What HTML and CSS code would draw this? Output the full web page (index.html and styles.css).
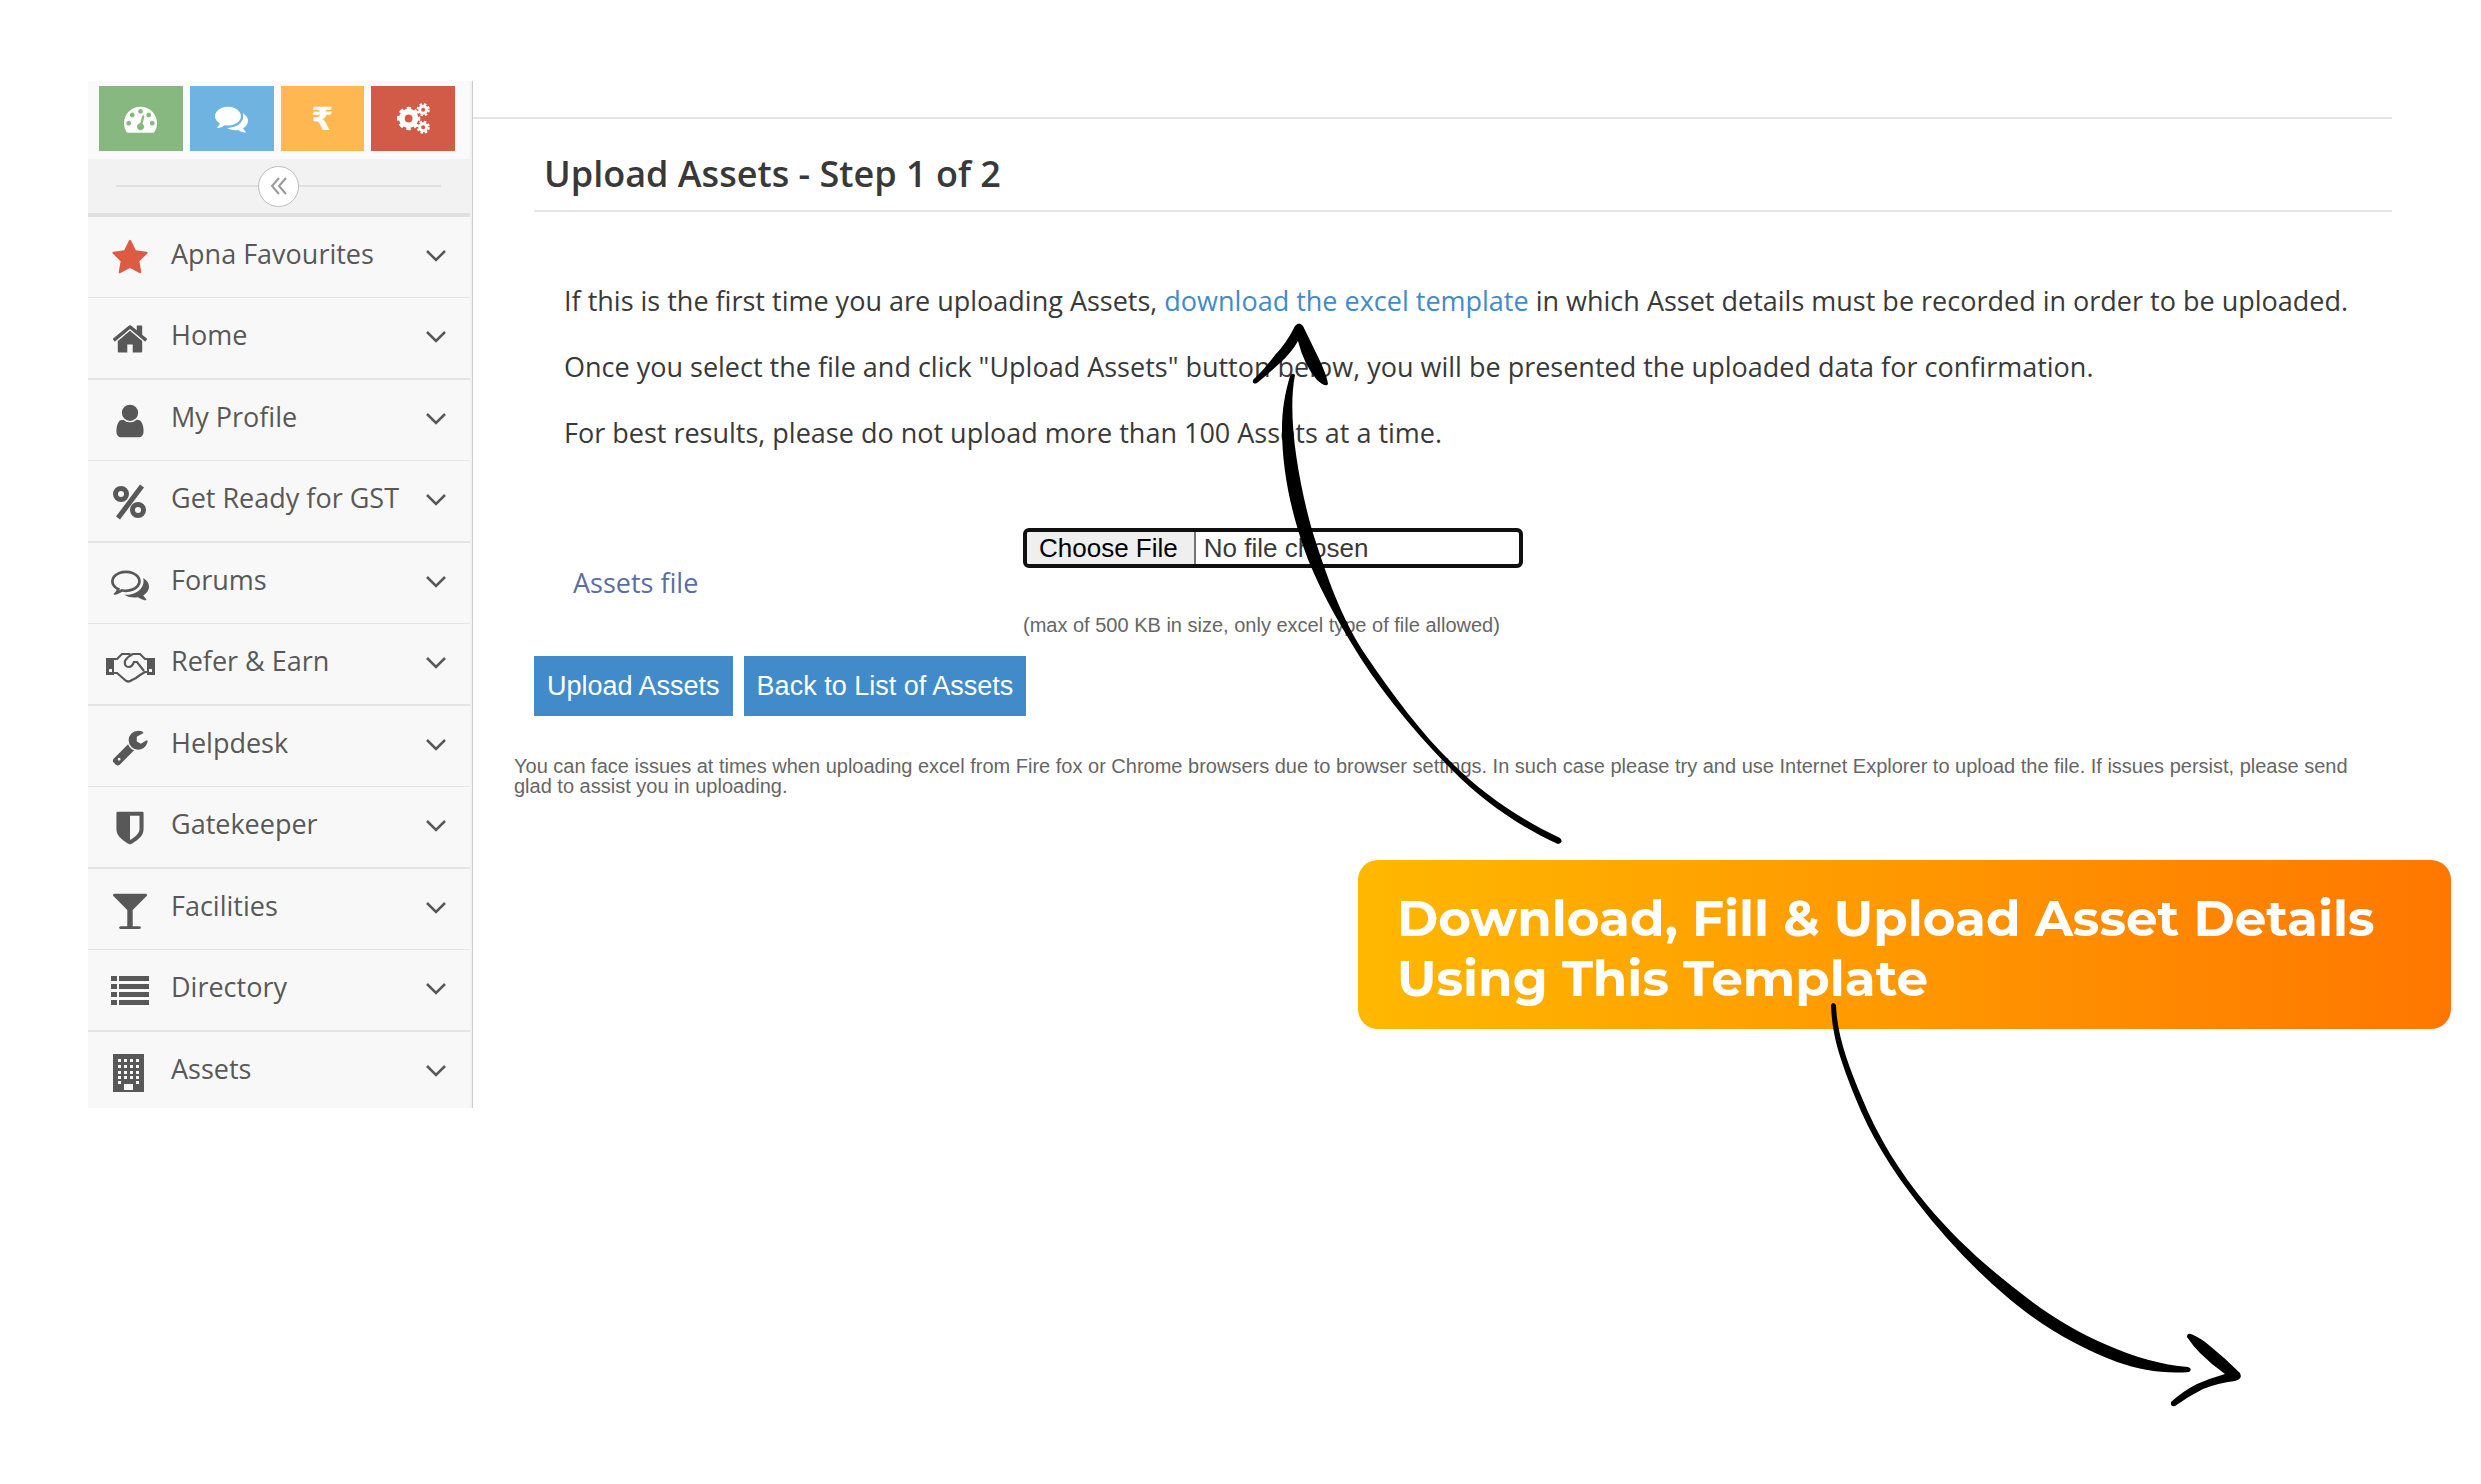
FILE: index.html
```
<!DOCTYPE html>
<html lang="en">
<head>
  <meta charset="UTF-8">
  <meta name="viewport" content="width=device-width, initial-scale=1.0">
  <title>Upload Assets</title>
  <link rel="stylesheet" href="styles.css">
</head>
<body>
  <!-- shared chevron -->
  <svg class="symbols" aria-hidden="true">
    <symbol id="chevron" viewBox="0 0 22 14"><path d="M2 2l9 9 9-9" fill="none" stroke="#585858" stroke-width="2.5"/></symbol>
  </svg>

  <div class="page">
    <aside class="sidebar">
      <div class="shortcuts">
        <button type="button" class="shortcut green" aria-label="Dashboard">
          <svg viewBox="0 0 1792 1792"><path d="M384 1152q0-53-37.5-90.5t-90.5-37.5-90.5 37.5-37.5 90.5 37.5 90.5 90.5 37.5 90.5-37.5 37.5-90.5zm192-448q0-53-37.5-90.5t-90.5-37.5-90.5 37.5-37.5 90.5 37.5 90.5 90.5 37.5 90.5-37.5 37.5-90.5zm428 481l101-382q6-26-7.5-48.5t-38.5-29.5-48 6.5-30 39.5l-101 382q-60 5-107 43.5t-63 98.5q-20 77 20 146t117 89 146-20 89-117q16-60-6-117t-72-91zm660-33q0-53-37.5-90.5t-90.5-37.5-90.5 37.5-37.5 90.5 37.5 90.5 90.5 37.5 90.5-37.5 37.5-90.5zm-640-640q0-53-37.5-90.5t-90.5-37.5-90.5 37.5-37.5 90.5 37.5 90.5 90.5 37.5 90.5-37.5 37.5-90.5zm448 192q0-53-37.5-90.5t-90.5-37.5-90.5 37.5-37.5 90.5 37.5 90.5 90.5 37.5 90.5-37.5 37.5-90.5zm320 448q0 261-141 483-19 29-54 29h-1402q-35 0-54-29-141-221-141-483 0-182 71-348t191-286 286-191 348-71 348 71 286 191 191 286 71 348z"/></svg>
        </button>
        <button type="button" class="shortcut blue" aria-label="Messages">
          <svg viewBox="0 0 1792 1792"><path d="M1408 768q0 139-94 257t-256.5 186.5-353.5 68.5q-86 0-176-16-124 88-278 128-36 9-86 16h-3q-11 0-20.5-8t-11.5-21q-1-3-1-6.5t.5-6.5 2-6l2.5-5 3.5-5.5 4-5 4.5-5 4-4.5q5-6 23-25t26-29.5 22.5-29 25-38.5 20.5-44q-124-72-195-177t-71-224q0-139 94-257t256.5-186.5 353.5-68.5 353.5 68.5 256.5 186.5 94 257zm384 256q0 120-71 224.5t-195 176.5q10 24 20.5 44t25 38.5 22.5 29 26 29.5 23 25q1 1 4 4.5t4.5 5 4 5 3.5 5.5l2.5 5 2 6 .5 6.5-1 6.5q-3 14-13 22t-22 7q-50-7-86-16-154-40-278-128-90 16-176 16-271 0-472-132 58 4 88 4 161 0 309-45t264-129q125-92 192-212t67-254q0-77-23-152 129 71 204 178t75 230z"/></svg>
        </button>
        <button type="button" class="shortcut orange">&#8377;</button>
        <button type="button" class="shortcut red" aria-label="Settings">
          <svg viewBox="0 0 34 34" fill="none" stroke="#fff">
            <circle cx="12" cy="17" r="7" stroke-width="6"/>
            <circle cx="12" cy="17" r="10.5" stroke-width="3" stroke-dasharray="4.6 3.647" stroke-dashoffset="2.3"/>
            <circle cx="27" cy="8" r="3.6" stroke-width="3"/>
            <circle cx="27" cy="8" r="5.8" stroke-width="2" stroke-dasharray="2.6 1.955"/>
            <circle cx="27" cy="26" r="3.6" stroke-width="3"/>
            <circle cx="27" cy="26" r="5.8" stroke-width="2" stroke-dasharray="2.6 1.955"/>
          </svg>
        </button>
      </div>

      <div class="collapse">
        <button type="button" class="collapse-btn" aria-label="Collapse menu">
          <svg viewBox="0 0 18 18"><path d="M9 1L2 9l7 8M16 1L9 9l7 8" fill="none" stroke="#999" stroke-width="2"/></svg>
        </button>
      </div>

      <ul class="menu">
        <li><a href="#">
          <span class="icon star"><svg viewBox="0 0 1792 1792"><path d="M1728 647q0 22-26 48l-363 354 86 500q1 7 1 20 0 21-10.5 35.5t-30.5 14.5q-19 0-40-12l-449-236-449 236q-22 12-40 12-21 0-31.5-14.5t-10.5-35.5q0-6 2-20l86-500-364-354q-25-27-25-48 0-37 56-46l502-73 225-455q19-41 49-41t49 41l225 455 502 73q56 9 56 46z"/></svg></span>
          <span class="label">Apna Favourites</span>
          <svg class="chevron"><use href="#chevron"/></svg>
        </a></li>
        <li><a href="#">
          <span class="icon"><svg viewBox="0 0 1792 1792"><path d="M1472 992v480q0 26-19 45t-45 19h-384v-384h-256v384h-384q-26 0-45-19t-19-45v-480q0-1 .5-3t.5-3l575-474 575 474q1 2 1 6zm223-69l-62 74q-8 9-21 11h-3q-13 0-21-7l-692-577-692 577q-12 8-24 7-13-2-21-11l-62-74q-8-10-7-23.5t11-21.5l719-599q32-26 76-26t76 26l244 204v-195q0-14 9-23t23-9h192q14 0 23 9t9 23v408l219 182q10 8 11 21.5t-7 23.5z"/></svg></span>
          <span class="label">Home</span>
          <svg class="chevron"><use href="#chevron"/></svg>
        </a></li>
        <li><a href="#">
          <span class="icon"><svg viewBox="0 0 1792 1792"><path d="M1536 1399q0 109-62.5 187t-150.5 78h-854q-88 0-150.5-78t-62.5-187q0-85 8.5-160.5t31.5-152 58.5-131 94-89 134.5-34.5q131 128 313 128t313-128q76 0 134.5 34.5t94 89 58.5 131 31.5 152 8.5 160.5zm-256-887q0 159-112.5 271.5t-271.5 112.5-271.5-112.5-112.5-271.5 112.5-271.5 271.5-112.5 271.5 112.5 112.5 271.5z"/></svg></span>
          <span class="label">My Profile</span>
          <svg class="chevron"><use href="#chevron"/></svg>
        </a></li>
        <li><a href="#">
          <span class="icon"><svg viewBox="0 0 38 38" fill="none" stroke="#585858" stroke-width="5"><circle class="hollow" cx="10" cy="11" r="5.5"/><circle class="hollow" cx="27" cy="27" r="5.5"/><path d="M31 3L7 35"/></svg></span>
          <span class="label">Get Ready for GST</span>
          <svg class="chevron"><use href="#chevron"/></svg>
        </a></li>
        <li><a href="#">
          <span class="icon"><svg viewBox="0 0 1792 1792"><path d="M704 384q-153 0-286 52t-211.5 141-78.5 191q0 82 53 158t149 132l97 56-35 84q34-20 62-39l44-31 53 10q78 14 153 14 153 0 286-52t211.5-141 78.5-191-78.5-191-211.5-141-286-52zm0-128q191 0 353.5 68.5t256.5 186.5 94 257-94 257-256.5 186.5-353.5 68.5q-86 0-176-16-124 88-278 128-36 9-86 16h-3q-11 0-20.5-8t-11.5-21q-1-3-1-6.5t.5-6.5 2-6l2.5-5 3.5-5.5 4-5 4.5-5 4-4.5q5-6 23-25t26-29.5 22.5-29 25-38.5 20.5-44q-124-72-195-177t-71-224q0-139 94-257t256.5-186.5 353.5-68.5zm822 1169q10 24 20.5 44t25 38.5 22.5 29 26 29.5 23 25q1 1 4 4.5t4.5 5 4 5 3.5 5.5l2.5 5 2 6 .5 6.5-1 6.5q-3 14-13 22t-22 7q-50-7-86-16-154-40-278-128-90 16-176 16-271 0-472-132 58 4 88 4 161 0 309-45t264-129q125-92 192-212t67-254q0-77-23-152 129 71 204 178t75 230q0 120-71 224.5t-195 176.5z"/></svg></span>
          <span class="label">Forums</span>
          <svg class="chevron"><use href="#chevron"/></svg>
        </a></li>
        <li><a href="#">
          <span class="icon wide"><svg viewBox="0 -6 49 38"><path fill-rule="evenodd" d="M0 6h8v17H0zM3 17v3h3v-3zM41 6h8v17h-8zM43 17v3h3v-3z"/><path class="hollow" d="M7 7h4l5-5h7l2 1 2-1h7l5 5h3M7 21h4l8 7q3 3 7 0l4-2 4-3 5-3h3M26 3q-4 1-7 6-1 6 4 6 3 0 5-5h3l7 9" fill="none" stroke="#585858" stroke-width="2.2"/></svg></span>
          <span class="label">Refer &amp; Earn</span>
          <svg class="chevron"><use href="#chevron"/></svg>
        </a></li>
        <li><a href="#">
          <span class="icon"><svg viewBox="0 0 1792 1792"><path d="M448 1472q0-26-19-45t-45-19-45 19-19 45 19 45 45 19 45-19 19-45zm644-420l-682 682q-37 37-90 37-52 0-91-37l-106-108q-38-36-38-90 0-53 38-91l681-681q39 98 114.5 173.5t173.5 114.5zm634-435q0 39-23 106-47 134-164.5 217.5t-258.5 83.5q-185 0-316.5-131.5t-131.5-316.5 131.5-316.5 316.5-131.5q58 0 121.5 16.5t107.5 46.5q16 11 16 28t-16 28l-293 169v224l193 107q5-3 79-48.5t135.5-81 70.5-35.5q15 0 23.5 10t8.5 25z"/></svg></span>
          <span class="label">Helpdesk</span>
          <svg class="chevron"><use href="#chevron"/></svg>
        </a></li>
        <li><a href="#">
          <span class="icon"><svg viewBox="0 0 1792 1792"><path d="M1344 960v-640h-448v1137q119-63 213-137 235-184 235-360zm192-768v768q0 86-33.5 170.5t-83 150-118 127.5-126.5 103-121 77.5-89.5 49.5-42.5 20q-12 6-26 6t-26-6q-16-7-42.5-20t-89.5-49.5-121-77.5-126.5-103-118-127.5-83-150-33.5-170.5v-768q0-26 19-45t45-19h1152q26 0 45 19t19 45z"/></svg></span>
          <span class="label">Gatekeeper</span>
          <svg class="chevron"><use href="#chevron"/></svg>
        </a></li>
        <li><a href="#">
          <span class="icon"><svg viewBox="0 0 1792 1792"><path d="M1699 186q0 35-43 78l-632 632v768h320q26 0 45 19t19 45-19 45-45 19h-896q-26 0-45-19t-19-45 19-45 45-19h320v-768l-632-632q-43-43-43-78 0-23 18-36.5t38-17.5 43-4h1408q23 0 43 4t38 17.5 18 36.5z"/></svg></span>
          <span class="label">Facilities</span>
          <svg class="chevron"><use href="#chevron"/></svg>
        </a></li>
        <li><a href="#">
          <span class="icon"><svg viewBox="0 0 38 38"><path d="M0 4h6v5H0zM8 4h30v5H8zM0 12h6v5H0zM8 12h30v5H8zM0 20h6v5H0zM8 20h30v5H8zM0 28h6v5H0zM8 28h30v5H8z"/></svg></span>
          <span class="label">Directory</span>
          <svg class="chevron"><use href="#chevron"/></svg>
        </a></li>
        <li><a href="#">
          <span class="icon"><svg viewBox="0 0 38 38"><path d="M2 0h31v38H2z"/><path fill="#f8f8f8" d="M7 5h3v3H7zM13 5h3v3h-3zM19 5h3v3h-3zM25 5h3v3h-3zM7 11h3v3H7zM13 11h3v3h-3zM19 11h3v3h-3zM25 11h3v3h-3zM7 17h3v3H7zM13 17h3v3h-3zM19 17h3v3h-3zM25 17h3v3h-3zM7 22h3v3H7zM13 22h3v3h-3zM19 22h3v3h-3zM25 22h3v3h-3zM7 27h3v3H7zM25 27h3v3h-3zM13 30h9v6h-9z"/></svg></span>
          <span class="label">Assets</span>
          <svg class="chevron"><use href="#chevron"/></svg>
        </a></li>
      </ul>
    </aside>

    <main class="content">
      <header class="page-header">
        <h1>Upload Assets - Step 1 of 2</h1>
      </header>

      <div class="intro">
        <p>If this is the first time you are uploading Assets, <a href="#">download the excel template</a> in which Asset details must be recorded in order to be uploaded.</p>
        <p>Once you select the file and click "Upload Assets" button below, you will be presented the uploaded data for confirmation.</p>
        <p>For best results, please do not upload more than 100 Assets at a time.</p>
      </div>

      <form action="#" method="post">
        <div class="field">
          <label for="assets-file">Assets file</label>
          <div class="control">
            <input type="file" id="assets-file" name="assets-file">
            <span class="hint">(max of 500 KB in size, only excel type of file allowed)</span>
          </div>
        </div>
        <div class="actions">
          <button type="submit" class="btn">Upload Assets</button>
          <button type="button" class="btn">Back to List of Assets</button>
        </div>
      </form>

      <p class="note">You can face issues at times when uploading excel from Fire fox or Chrome browsers due to browser settings. In such case please try and use Internet Explorer to upload the file. If issues persist, please send<br>glad to assist you in uploading.</p>
    </main>
  </div>

  <div class="callout">
    Download, Fill &amp; Upload Asset Details<br>Using This Template
    <svg class="arrow arrow-up" viewBox="1250 320 320 530" aria-hidden="true">
      <path d="M1290 376Q1292 372 1295 375C1287 415 1298 480 1312 530C1326 574 1341 619 1367 657C1393 695 1420 732 1453 764C1484 795 1522 820 1560 838Q1564 842 1558 844C1520 827 1483 801 1453 771C1414 732 1378 688 1350 641C1329 606 1309 569 1298 530C1288 497 1282 462 1282 429C1282 410 1285 393 1290 376Z"/>
      <path d="M1253 380Q1264 370 1275 355Q1286 344 1295 326Q1299 321 1303 326L1320 361Q1327 376 1328 384Q1326 388 1317 380Q1304 365 1298 341Q1292 352 1280 363Q1268 374 1257 383Q1252 385 1253 380Z"/>
    </svg>
    <svg class="arrow arrow-down" viewBox="1825 1000 420 410" aria-hidden="true">
      <path d="M1831 1005Q1833 1001 1836 1005C1837 1036 1849 1067 1862 1098C1878 1137 1900 1173 1927 1205C1953 1236 1981 1262 2013 1287C2044 1312 2072 1330 2107 1345C2134 1357 2162 1365 2188 1367Q2193 1369 2189 1372C2164 1374 2140 1370 2117 1362C2077 1347 2040 1325 2007 1297C1974 1269 1944 1237 1917 1202C1892 1170 1870 1135 1855 1097C1840 1059 1832 1036 1831 1005Z"/>
      <path d="M2187 1337Q2187 1333 2191 1334Q2201 1338 2210 1346Q2226 1359 2240 1373Q2243 1379 2235 1381Q2218 1383 2203 1389Q2189 1396 2175 1406Q2170 1407 2171 1402Q2183 1391 2197 1384Q2211 1378 2225 1374Q2212 1365 2200 1353Q2193 1346 2187 1337Z"/>
    </svg>
  </div>
</body>
</html>
```
FILE: styles.css
```
* {
  box-sizing: border-box;
}

body {
  margin: 0;
  min-height: 100vh;
  background-color: #fff;
  font-family: "Open Sans", sans-serif;
  font-size: 27px;
  color: #393939;
  position: relative;
}

.symbols {
  display: none;
}

.page {
  display: flex;
  align-items: flex-start;
  padding: 81px 89px 0 88px;
}

/* sidebar */
.sidebar {
  flex: 0 0 385px;
  padding-right: 2px;
  background-color: #f2f2f2;
  border-right: 1px solid #ccc;
}

.shortcuts {
  display: flex;
  gap: 7px;
  padding: 5px 15px 8px 11px;
  background-color: #fafafa;
}

.shortcut {
  flex: 1;
  display: flex;
  align-items: center;
  justify-content: center;
  height: 65px;
  padding: 0;
  border: none;
  color: #fff;
  font: bold 32px "DejaVu Sans", sans-serif;
  cursor: pointer;
}

.shortcut svg {
  width: 33px;
  height: 33px;
  fill: #fff;
}

.shortcut svg[fill="none"] {
  fill: none;
}

.green {
  background-color: #87b87f;
}

.blue {
  background-color: #6fb3e0;
}

.orange {
  background-color: #ffb752;
}

.red {
  background-color: #d15b47;
}

.collapse {
  display: flex;
  align-items: center;
  height: 58px;
  padding: 0 29px 0 28px;
  border-bottom: 4px solid #e0e0e0;
}

.collapse::before,
.collapse::after {
  content: "";
  flex: 1;
  height: 2px;
  background-color: #e0e0e0;
}

.collapse-btn {
  display: flex;
  align-items: center;
  justify-content: center;
  width: 41px;
  height: 41px;
  padding: 0;
  border: 1px solid #bbb;
  border-radius: 50%;
  background-color: #fff;
  cursor: pointer;
}

.collapse-btn svg {
  width: 18px;
  height: 18px;
}

.menu {
  margin: 0;
  padding: 0;
  list-style: none;
  background-color: #f8f8f8;
}

.menu li {
  border-bottom: 1px solid #e5e5e5;
}

.menu li:nth-child(even) {
  border-bottom-width: 2px;
}

.menu a {
  display: flex;
  align-items: center;
  gap: 16px;
  height: 80px;
  padding: 0 23px 0 17px;
  color: #585858;
  text-decoration: none;
}

.menu li:last-child {
  height: 76px;
  border-bottom: none;
}

.icon {
  display: flex;
  justify-content: center;
  width: 50px;
  padding-top: 2px;
}

.icon svg {
  width: 38px;
  height: 38px;
  fill: #585858;
}

.icon .hollow {
  fill: none;
}

.icon.star svg {
  fill: #dd5a43;
}

.icon.wide svg {
  width: 49px;
}

.label {
  flex: 1;
  padding-bottom: 8px;
  white-space: nowrap;
}

.chevron {
  width: 22px;
  height: 14px;
  margin-bottom: 3px;
}

/* content */
.content {
  flex: 1;
  min-width: 0;
  margin-top: 36px;
  border-top: 2px solid #e5e5e5;
}

.page-header {
  margin-left: 61px;
  padding: 29px 0 10px 10px;
  border-bottom: 2px solid #e5e5e5;
}

h1 {
  margin: 0;
  font-size: 36px;
  font-weight: 600;
  line-height: 52px;
}

.intro {
  margin: 71px 0 77px 91px;
}

.intro p {
  margin: 0 0 30px;
  line-height: 36px;
}

.intro p:last-child {
  margin-bottom: 0;
}

.intro a {
  color: #428bca;
  text-decoration: none;
}

form {
  margin-left: 61px;
}

.field {
  display: grid;
  grid-template-columns: 489px 1fr;
  align-items: center;
}

.field label {
  padding: 0 0 2px 39px;
  color: #5b6ea3;
}

.control {
  display: flex;
  flex-direction: column;
  align-items: flex-start;
  gap: 44px;
}

input[type="file"] {
  width: 500px;
  height: 40px;
  border: 4px solid #101010;
  border-radius: 6px;
  font: 26px/32px "Liberation Sans", Arial, sans-serif;
  color: #393939;
}

input[type="file"]::file-selector-button {
  height: 32px;
  margin: 0 8px 0 0;
  padding: 0 16px 0 12px;
  border: none;
  border-right: 2px solid #767676;
  background-color: #efefef;
  color: #000;
  font: inherit;
}

.hint,
.note {
  font-family: "Liberation Sans", Arial, sans-serif;
  font-size: 20px;
  color: #666;
}

.hint {
  line-height: 26px;
}

.actions {
  display: flex;
  gap: 11px;
  margin-top: 18px;
}

.btn {
  height: 60px;
  padding: 0 13px;
  border: none;
  background-color: #428bca;
  color: #fff;
  font: 27px "Liberation Sans", Arial, sans-serif;
  cursor: pointer;
}

.note {
  margin: 40px 0 0 41px;
  line-height: 20px;
}

/* callout with its two arrows, laid over the page */
.callout {
  position: absolute;
  top: 860px;
  left: 1358px;
  right: 30px;
  padding: 29px 39px 20px;
  border-radius: 20px;
  background: linear-gradient(90deg, #ffb800, #ff7700);
  color: #fff;
  font: bold 50px/60px Montserrat, Inter, sans-serif;
}

.arrow {
  position: absolute;
}

.arrow-up {
  top: -540px;
  left: -108px;
  width: 320px;
  height: 530px;
}

.arrow-down {
  top: 140px;
  left: 467px;
  width: 420px;
  height: 410px;
}
```
